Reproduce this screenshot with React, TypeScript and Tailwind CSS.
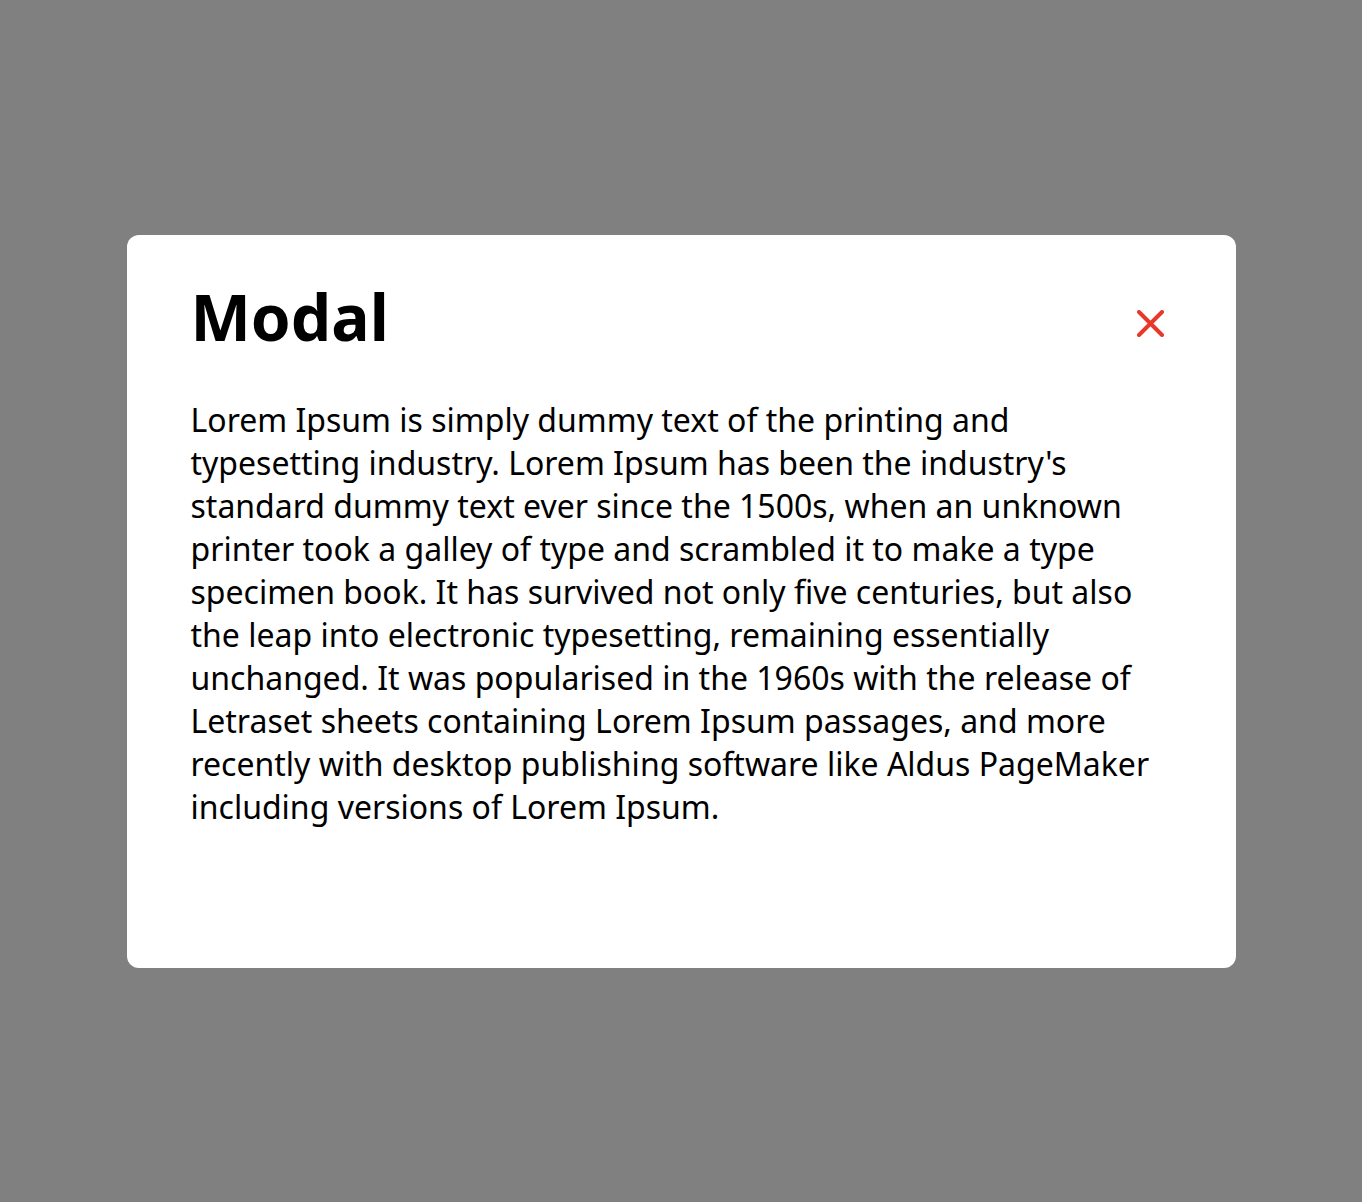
export default function App() {
  return (
    <div className="w-full h-[1202px] bg-[#808080] flex items-center justify-center" style={{ fontFamily: '"Noto Sans", "Noto Sans CJK KR", sans-serif' }}>
      <div className="w-[1109px] h-[733px] bg-white rounded-[12px] pl-16 pr-16 pt-[34px]">
        <div className="flex items-start justify-between">
          <h1 className="text-[64px] font-bold leading-normal text-black m-0">Modal</h1>
          <button className="mt-[41px] mr-[8px] w-[27px] h-[27px] p-0 flex items-center justify-center">
            <svg width="27" height="27" viewBox="0 0 27 27">
              <path d="M2 2 L25 25 M25 2 L2 25" stroke="#e6392c" strokeWidth="4" strokeLinecap="round" />
            </svg>
          </button>
        </div>
        <p className="mt-[33px] text-[32px] leading-[43px] text-black">
          Lorem Ipsum is simply dummy text of the printing and typesetting industry. Lorem Ipsum has been the industry's standard dummy text ever since the 1500s, when an unknown printer took a galley of type and scrambled it to make a type specimen book. It has survived not only five centuries, but also the leap into electronic typesetting, remaining essentially unchanged. It was popularised in the 1960s with the release of Letraset sheets containing Lorem Ipsum passages, and more recently with desktop publishing software like Aldus PageMaker including versions of Lorem Ipsum.
        </p>
      </div>
    </div>
  );
}
